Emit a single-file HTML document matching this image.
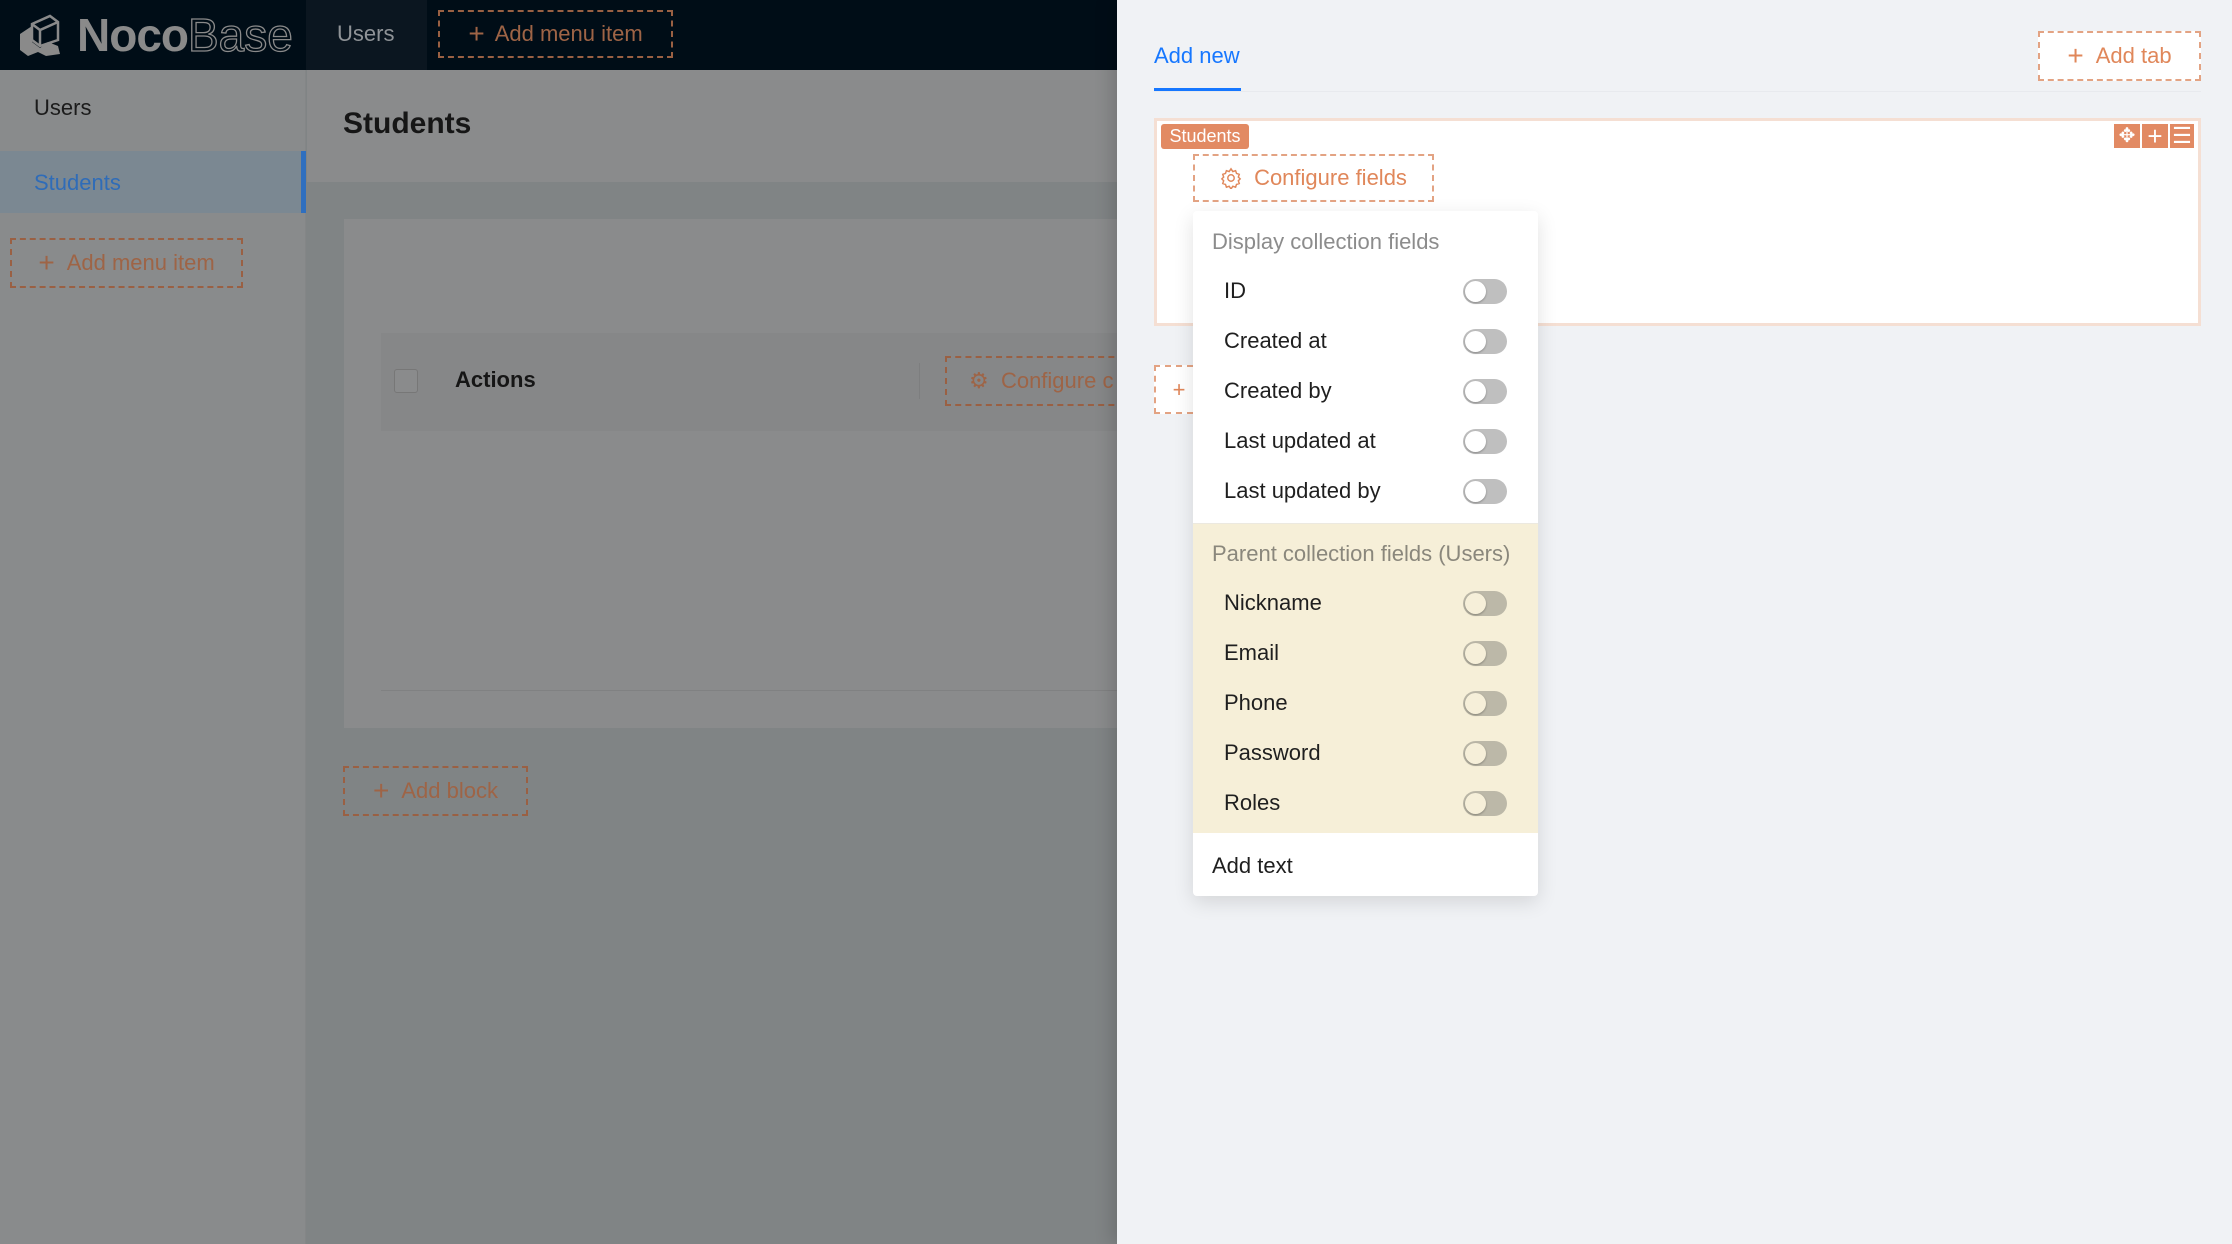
<!DOCTYPE html>
<html><head><meta charset="utf-8"><style>
*{box-sizing:border-box;margin:0;padding:0}
body{width:2232px;height:1244px;overflow:hidden;position:relative;font-family:"Liberation Sans",Arial,sans-serif;background:#808485}
.a{position:absolute}
.dash{position:absolute;border:2px dashed #9a6043;color:#9e6446;display:flex;align-items:center;justify-content:center;font-size:22px}
.dashL{position:absolute;border:2px dashed #e3a383;color:#e0875a;display:flex;align-items:center;justify-content:center;font-size:22px;background:#fff}
.row{position:absolute;left:0;width:345px;height:50px;display:flex;align-items:center;padding-left:31px;font-size:22px;color:#1f1f1f}
.sw{position:absolute;left:270px;width:44px;height:25px;border-radius:13px;background:#bfbfbf}
.sw::after{content:"";position:absolute;left:2px;top:2px;width:21px;height:21px;border-radius:50%;background:#fff;box-shadow:0 1px 2px rgba(0,0,0,.3)}
.y .sw{background:#bcb8a8}
.y .sw::after{background:#f6efd9}
</style></head><body>
<!-- top bar -->
<div class="a" style="left:0;top:0;width:1117px;height:70px;background:#000d17"></div>
<div class="a" style="left:306px;top:0;width:121px;height:70px;background:#0b1620"></div>
<svg class="a" style="left:18px;top:14px" width="50" height="42" viewBox="0 0 50 42"><path d="M2 20 L14 12 L14 28 L22 34 L30 28 L40 32 L42 40 L28 42 L20 38 L10 42 L2 36 Z" fill="#8a8a8a"/><path d="M14 10 L32 2 L40 8 L40 26 L22 32 L14 26 Z" fill="none" stroke="#8a8a8a" stroke-width="2.5"/><path d="M14 10 L22 16 L40 8 M22 16 L22 32" stroke="#8a8a8a" stroke-width="2.5" fill="none"/></svg>
<div class="a" style="left:77px;top:8px;font-size:46px;color:#8a8a8a;letter-spacing:-1px"><b>Noco</b><span style="color:transparent;-webkit-text-stroke:1.3px #8a8a8a;letter-spacing:0">Base</span></div>
<div class="a" style="left:337px;top:21px;font-size:22px;color:#8f9397">Users</div>
<div class="dash" style="left:438px;top:10px;width:235px;height:48px"><span style="font-size:28px;margin-right:10px;font-weight:300">+</span>Add menu item</div>
<!-- sidebar -->
<div class="a" style="left:0;top:70px;width:306px;height:1174px;background:#898b8c;border-right:1px solid #848687"></div>
<div class="a" style="left:34px;top:95px;font-size:22px;color:#1b1b1b">Users</div>
<div class="a" style="left:0;top:151px;width:306px;height:62px;background:#7b8892;border-right:5px solid #2f6fbf"></div>
<div class="a" style="left:34px;top:170px;font-size:22px;color:#2f6cb8">Students</div>
<div class="dash" style="left:10px;top:238px;width:233px;height:50px"><span style="font-size:28px;margin-right:12px;font-weight:300">+</span>Add menu item</div>
<!-- main -->
<div class="a" style="left:307px;top:70px;width:810px;height:112px;background:#8a8b8c"></div>
<div class="a" style="left:343px;top:107px;font-size:30px;font-weight:bold;color:#161616">Students</div>
<div class="a" style="left:344px;top:219px;width:773px;height:509px;background:#8a8b8c"></div>
<div class="a" style="left:381px;top:333px;width:736px;height:98px;background:#868788"></div>
<div class="a" style="left:394px;top:369px;width:24px;height:24px;border:1px solid #777;border-radius:3px;background:#8a8b8c"></div>
<div class="a" style="left:455px;top:367px;font-size:22px;font-weight:bold;color:#161616">Actions</div>
<div class="a" style="left:919px;top:363px;width:1px;height:36px;background:#7d7e7f"></div>
<div class="dash" style="left:945px;top:356px;width:200px;height:50px;justify-content:flex-start;padding-left:22px">⚙&nbsp; Configure c</div>
<div class="a" style="left:381px;top:690px;width:736px;height:1px;background:#808182"></div>
<div class="dash" style="left:343px;top:766px;width:185px;height:50px"><span style="font-size:28px;margin-right:12px;font-weight:300">+</span>Add block</div>
<!-- drawer -->
<div class="a" style="left:1117px;top:0;width:1115px;height:1244px;background:#f0f2f5;box-shadow:-6px 0 16px rgba(0,0,0,.15)"></div>
<div class="a" style="left:1154px;top:43px;font-size:22px;color:#1677ff">Add new</div>
<div class="a" style="left:1154px;top:88px;width:87px;height:3px;background:#1677ff"></div>
<div class="a" style="left:1154px;top:91px;width:1047px;height:1px;background:#e8eaee"></div>
<div class="dashL" style="left:2038px;top:31px;width:163px;height:50px"><span style="font-size:28px;margin-right:12px;font-weight:300">+</span>Add tab</div>
<div class="a" style="left:1154px;top:118px;width:1047px;height:208px;background:#fff;border:3px solid #f5dfd3"></div>
<div class="a" style="left:1161px;top:124px;width:88px;height:25px;background:#e28a63;border-radius:3px;color:#fff;font-size:18px;line-height:25px;text-align:center">Students</div>
<div class="a" style="left:2114px;top:124px;width:26px;height:24px;background:#e28a63;color:#fff;text-align:center;font-size:20px;line-height:24px">✥</div>
<div class="a" style="left:2142px;top:124px;width:26px;height:24px;background:#e28a63;color:#fff;text-align:center;font-size:26px;line-height:24px">+</div>
<div class="a" style="left:2170px;top:124px;width:24px;height:24px;background:#e28a63;color:#fff;text-align:center;font-size:22px;line-height:24px">☰</div>
<div class="dashL" style="left:1193px;top:154px;width:241px;height:48px"><svg width="22" height="22" viewBox="0 0 24 24" style="margin-right:12px"><path d="M12 2l2 3 3-1 1 3 3 1-1 3 2 2-2 2 1 3-3 1-1 3-3-1-2 3-2-3-3 1-1-3-3-1 1-3-2-2 2-2-1-3 3-1 1-3 3 1z" fill="none" stroke="#e0875a" stroke-width="1.6"/><circle cx="12" cy="12" r="3.5" fill="none" stroke="#e0875a" stroke-width="1.6"/></svg>Configure fields</div>
<div class="dashL" style="left:1154px;top:365px;width:50px;height:49px">+</div>
<!-- dropdown -->
<div class="a" style="left:1193px;top:211px;width:345px;height:685px;background:#fff;border-radius:4px;box-shadow:0 6px 20px rgba(0,0,0,.12)">
<div class="a" style="left:19px;top:18px;font-size:22px;color:#8c8c8c">Display collection fields</div>
<div class="row" style="top:55px">ID<div class="sw"></div></div>
<div class="row" style="top:105px">Created at<div class="sw"></div></div>
<div class="row" style="top:155px">Created by<div class="sw"></div></div>
<div class="row" style="top:205px">Last updated at<div class="sw"></div></div>
<div class="row" style="top:255px">Last updated by<div class="sw"></div></div>
<div class="a y" style="left:0;top:312px;width:345px;height:310px;background:#f6efd8;border-top:1px solid #ece9e0">
<div class="a" style="left:19px;top:17px;font-size:22px;color:#8a877c">Parent collection fields (Users)</div>
<div class="row" style="top:54px">Nickname<div class="sw"></div></div>
<div class="row" style="top:104px">Email<div class="sw"></div></div>
<div class="row" style="top:154px">Phone<div class="sw"></div></div>
<div class="row" style="top:204px">Password<div class="sw"></div></div>
<div class="row" style="top:254px">Roles<div class="sw"></div></div>
</div>
<div class="a" style="left:19px;top:642px;font-size:22px;color:#1f1f1f">Add text</div>
</div>
</body></html>
